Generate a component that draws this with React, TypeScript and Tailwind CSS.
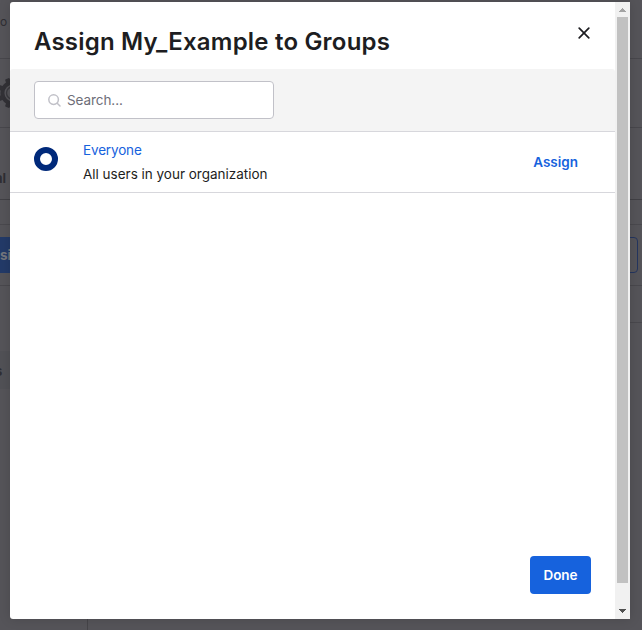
import React from 'react';

const gearTeeth = [22.5, 67.5, 112.5, 157.5, 202.5, 247.5, 292.5, 337.5];

function BackgroundPage() {
  return (
    <div className="flex h-full flex-col overflow-hidden bg-[#555459] text-[#2f2e33]">
      <div className="h-[59px] shrink-0 border-b border-[#48474c] pt-[13px] text-[12px] leading-[18px]">
        <span className="tracking-[-0.5px]">o</span>
      </div>
      <div className="flex h-[69px] shrink-0 items-start border-b border-[#48474c] pt-[17px]">
        <svg className="-ml-[4px] h-[34px] w-[34px]" viewBox="0 0 34 34" fill="none">
          <circle cx="17" cy="17" r="10.6" stroke="#323136" strokeWidth="4" />
          {gearTeeth.map((angle) => (
            <rect key={angle} x="14.6" y="1.6" width="4.8" height="5" rx="1" fill="#323136" transform={`rotate(${angle} 17 17)`} />
          ))}
          <circle cx="17" cy="17" r="6.5" stroke="#3a393e" strokeWidth="1.4" />
        </svg>
      </div>
      <div className="h-[72px] shrink-0 border-b border-[#414045] pt-[41px] text-[13px] font-bold leading-[18px]">
        <span className="-ml-[5px]">al</span>
      </div>
      <div className="h-[25px] shrink-0 border-b border-[#4a494e]" />
      <div className="flex h-[61px] shrink-0 items-center justify-between border-b border-[#49484d] pr-[4px]">
        <div className="flex h-[36px] w-[80px] items-center bg-[#233a68] text-[13.5px] font-bold text-[#74767d]">
          <span>sign</span>
        </div>
        <div className="h-[36px] w-[100px] rounded-[4px] border border-[#24355f]" />
      </div>
      <div className="flex min-h-0 flex-1">
        <div className="w-[88px] border-r border-[#464549] pt-[65px]">
          <div className="h-[38px] bg-[#515156] pt-[11px] text-[13px] font-bold leading-[18px]">
            <span className="-ml-[5px]">s</span>
          </div>
        </div>
        <div className="h-[37px] flex-1 border-b border-[#49484d]" />
      </div>
    </div>
  );
}

function Scrollbar() {
  return (
    <div className="flex w-[15px] shrink-0 flex-col items-center bg-[#f1f1f1]">
      <div className="flex h-[15px] items-center justify-center">
        <svg className="h-[4px] w-[7px]" viewBox="0 0 7 4" shapeRendering="crispEdges">
          <path d="M3 0h1v1h1v1h1v1h1v1H0V3h1V2h1V1h1z" fill="#a3a3a3" />
        </svg>
      </div>
      <div className="h-[566px] w-[11px] bg-[#c1c1c1]" />
      <div className="flex flex-1 items-end justify-center pb-[6px]">
        <svg className="h-[4px] w-[7px]" viewBox="0 0 7 4" shapeRendering="crispEdges">
          <path d="M0 0h7v1H6v1H5v1H4v1H3V3H2V2H1V1H0z" fill="#505050" />
        </svg>
      </div>
    </div>
  );
}

function GroupRow() {
  return (
    <div className="flex h-[61px] shrink-0 items-start border-b border-[#d7d7dc] pl-[24px] pr-[37px]">
      <div className="mt-[15px] h-[24px] w-[24px] rounded-full border-[6px] border-[#00297a]" />
      <div className="ml-[25px] flex-1 pt-[6px] text-[13.5px] leading-[24px]">
        <div className="text-[#1662dd]">
          <span className="tracking-[-0.15px]">Everyone</span>
        </div>
        <div className="text-[#1d1d21]">
          <span className="tracking-[-0.01px]">All users in your organization</span>
        </div>
      </div>
      <button className="mt-[20px] text-[13.5px] font-semibold leading-[20px] text-[#1662dd]">Assign</button>
    </div>
  );
}

function Dialog() {
  return (
    <div className="absolute left-[10px] top-[2px] flex h-[617px] w-[620px] overflow-hidden rounded-l-[3px] bg-white shadow-[0_0_12px_rgba(0,0,0,0.15)]">
      <div className="flex min-w-0 flex-1 flex-col">
        <header className="flex h-[67px] shrink-0 items-start justify-between pl-[24px] pr-[25px]">
          <h1 className="pt-[24px] text-[24px] font-semibold leading-[32px] tracking-[0.2px] text-[#1d1d21]">
            Assign My_Example to Groups
          </h1>
          <button className="mt-[25px]" aria-label="Close">
            <svg className="h-[12px] w-[12px]" viewBox="0 0 12 12" fill="none">
              <path d="M1.2 1.2l9.6 9.6M10.8 1.2l-9.6 9.6" stroke="#1d1d21" strokeWidth="1.7" strokeLinecap="round" />
            </svg>
          </button>
        </header>
        <div className="h-[63px] shrink-0 rounded-t-[3px] border-b border-[#d7d7dc] bg-[#f4f4f4] pl-[24px] pt-[12px]">
          <label className="flex h-[38px] w-[240px] items-center rounded-[4px] border border-[#c1c1c8] bg-white pl-[13px]">
            <svg className="h-[13px] w-[13px]" viewBox="0 0 13 13" fill="none" stroke="#c1c1c8" strokeWidth="1.5" strokeLinecap="round">
              <circle cx="5.6" cy="5.6" r="4.8" />
              <path d="M9.2 9.2l2.8 2.8" />
            </svg>
            <span className="ml-[6px] text-[13.5px] leading-[20px] tracking-[-0.08px] text-[#6e6e78]">Search...</span>
          </label>
        </div>
        <GroupRow />
        <footer className="mt-auto flex justify-end pb-[25px] pr-[24px]">
          <button className="h-[38px] w-[61px] rounded-[4px] bg-[#1662dd] text-[13.5px] font-semibold leading-[20px] text-white">Done</button>
        </footer>
      </div>
      <Scrollbar />
    </div>
  );
}

export default function App() {
  return (
    <div className="relative h-[630px] w-[642px] overflow-hidden font-['Inter','Liberation_Sans',sans-serif]">
      <BackgroundPage />
      <Dialog />
    </div>
  );
}
